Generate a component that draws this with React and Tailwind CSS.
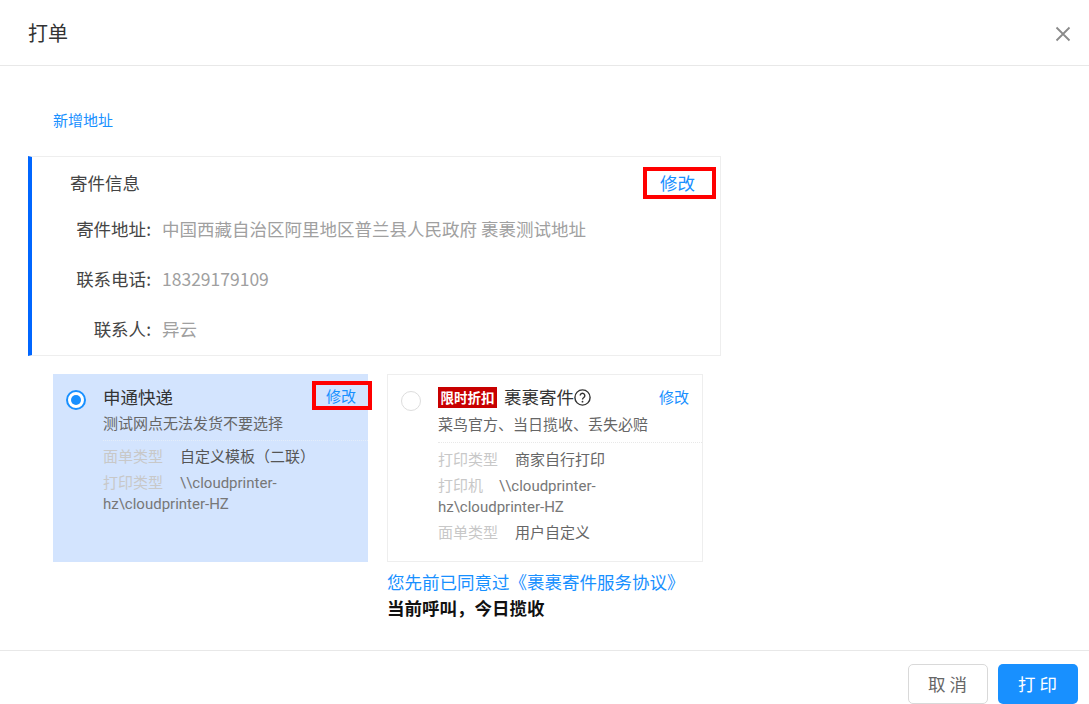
import React from 'react';

const cjk = "font-['Noto_Sans_CJK_SC','Open_Sans',sans-serif]";

// -------- Helpers --------
function InfoRow({ label, children }) {
  return (
    <div className="flex h-[50px] items-center">
      <div className="w-[119px] text-right text-[#444]">{label}:</div>
      <div className="pl-[11px] text-[#a0a0a0]">{children}</div>
    </div>
  );
}

function Meta({ label, gap = 'mr-[17px]', children }) {
  return (
    <div className="mt-[5px] w-[230px] font-['Roboto','Noto_Sans_CJK_SC',sans-serif] text-[15px] leading-[21px] text-[#777]">
      <span className={`text-[#c8c8c8] ${gap}`}>{label}</span>
      {children}
    </div>
  );
}

export default function App() {
  return (
    <div className={`flex h-[704px] w-[1089px] flex-col overflow-hidden bg-white ${cjk}`}>
      {/* -------- Header -------- */}
      <div className="flex h-[66px] shrink-0 items-center justify-between border-b border-[#e8e8e8] pl-[28px] pr-[18px]">
        <div className="text-[20px] text-[#333]">打单</div>
        <svg width="16" height="16" viewBox="0 0 16 16" className="mt-[3px]" fill="none" stroke="#8a8a8a" strokeWidth="1.8">
          <path d="M1.5 1.5 14.5 14.5M14.5 1.5 1.5 14.5" />
        </svg>
      </div>

      {/* -------- Body -------- */}
      <div className="flex-1 pl-[28px] pt-[43px]">
        <div className="ml-[25px] text-[15px] leading-[21px] text-[#1890ff]">新增地址</div>

        <div className="mt-[26px] h-[200px] w-[693px] border border-l-4 border-[#eeeeee] border-l-[#0066ff] text-[17.5px]">
          <div className="relative flex h-[47px] items-start pl-[38px] pt-[13px] leading-[26px] text-[#444]">
            寄件信息
            <div className="absolute right-[4px] top-[10px] flex h-[32px] w-[73px] items-center justify-center border-4 border-[#ff0000] pr-[4px] text-[#1890ff]">
              修改
            </div>
          </div>
          <InfoRow label="寄件地址">中国西藏自治区阿里地区普兰县人民政府 裹裹测试地址</InfoRow>
          <InfoRow label="联系电话">18329179109</InfoRow>
          <InfoRow label="联系人">异云</InfoRow>
        </div>

        <div className="ml-[25px] mt-[18px] flex items-start gap-[19px]">
          {/* -------- 申通快递 -------- */}
          <div className="flex h-[188px] w-[315px] bg-[#d3e4fe]">
            <div className="ml-[13px] mt-[16px] flex h-[20px] w-[20px] items-center justify-center rounded-full border-2 border-[#1890ff] bg-white">
              <div className="h-[10px] w-[10px] rounded-full bg-[#1890ff]" />
            </div>
            <div className="ml-[17px] flex-1 pt-[10px]">
              <div className="relative text-[17.5px] leading-[26px] text-[#333]">
                申通快递
                <div className="absolute right-[-4px] top-[-3px] flex h-[29px] w-[60px] items-center justify-center border-4 border-[#ff0000] pr-[2px] text-[15px] text-[#1890ff]">
                  修改
                </div>
              </div>
              <div className="text-[15px] leading-[26px] text-[#666]">测试网点无法发货不要选择</div>
              <div className="mb-[6px] mt-[4px] border-t border-dotted border-[#e4edf9]" />
              <Meta label="面单类型"><span className="text-[#555]">自定义模板（二联）</span></Meta>
              <Meta label="打印类型">\\cloudprinter-hz\cloudprinter-HZ</Meta>
            </div>
          </div>

          <div className="w-[316px]">
            {/* -------- 裹裹寄件 -------- */}
            <div className="flex h-[188px] border border-[#eeeeee]">
              <div className="ml-[13px] mt-[16px] h-[20px] w-[20px] rounded-full border border-[#dddddd]" />
              <div className="ml-[17px] flex-1 pt-[12px]">
                <div className="flex h-[21px] items-center pr-[13px]">
                  <span className="flex h-[21px] w-[59px] items-center justify-center bg-[#c80000] text-[13.5px] font-bold text-white">限时折扣</span>
                  <span className="ml-[7px] text-[17.5px] text-[#333]">裹裹寄件</span>
                  <svg width="17" height="17" viewBox="0 0 17 17" fill="none" stroke="#333" strokeWidth="1.4">
                    <circle cx="8.5" cy="8.5" r="7.6" />
                    <path d="M6.2 6.6a2.3 2.3 0 1 1 3.6 1.9c-.9.6-1.3 1-1.3 2" />
                    <circle cx="8.5" cy="12.7" r=".9" fill="#333" stroke="none" />
                  </svg>
                  <span className="ml-auto text-[15px] text-[#1890ff]">修改</span>
                </div>
                <div className="mt-[2px] text-[15px] leading-[28px] text-[#666]">菜鸟官方、当日揽收、丢失必赔</div>
                <div className="mb-[7px] mt-[4px] border-t border-dotted border-[#e8e8e8]" />
                <Meta label="打印类型"><span className="text-[#666]">商家自行打印</span></Meta>
                <Meta label="打印机" gap="mr-[16px]">\\cloudprinter-hz\cloudprinter-HZ</Meta>
                <Meta label="面单类型"><span className="text-[#666]">用户自定义</span></Meta>
              </div>
            </div>
            <div className="mt-[8px] text-[17.5px] leading-[24px] text-[#1890ff]">您先前已同意过《裹裹寄件服务协议》</div>
            <div className="mt-[2px] text-[17.5px] font-bold leading-[24px] text-[#111]">当前呼叫，今日揽收</div>
          </div>
        </div>
      </div>

      {/* -------- Footer -------- */}
      <div className="flex h-[54px] shrink-0 items-start justify-end gap-[10px] border-t border-[#e8e8e8] pr-[11px] pt-[13px]">
        <button className="h-[40px] w-[80px] rounded-[5px] border border-[#d9d9d9] bg-white pl-[3px] text-[17.5px] tracking-[4px] text-[#666]">取消</button>
        <button className="h-[40px] w-[80px] rounded-[5px] bg-[#1890ff] pl-[3px] text-[17.5px] tracking-[4px] text-white">打印</button>
      </div>
    </div>
  );
}
